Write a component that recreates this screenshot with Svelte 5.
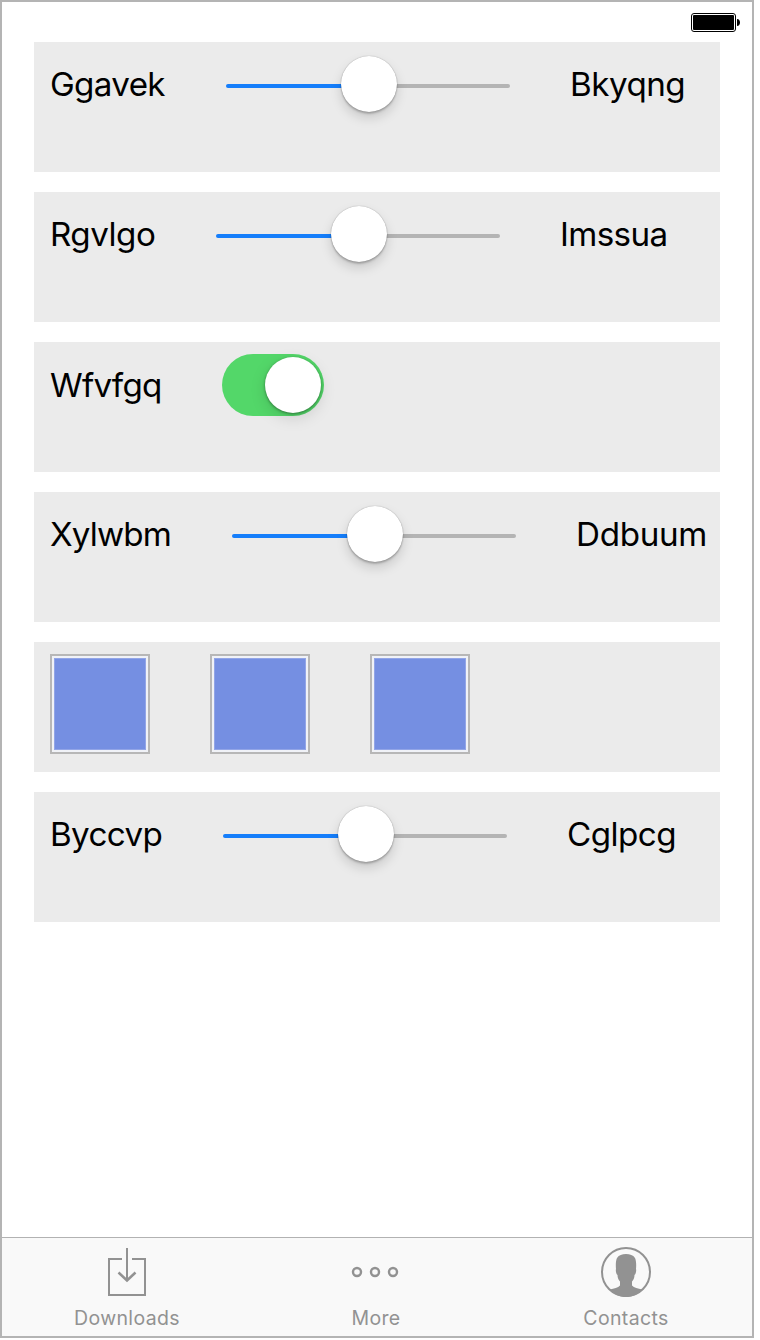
<script>
  const rows = [
    { kind: 'slider', label: 'Ggavek', end: 'Bkyqng', width: 116, track: -0.65, endTrack: -0.5 },
    { kind: 'slider', label: 'Rgvlgo', end: 'Imssua', width: 106, track: -0.5, endTrack: -0.65 },
    { kind: 'switch', label: 'Wfvfgq', width: 112, track: -0.75 },
    { kind: 'slider', label: 'Xylwbm', end: 'Ddbuum', width: 122, track: -0.85, endTrack: -0.3 },
    { kind: 'swatches' },
    { kind: 'slider', label: 'Byccvp', end: 'Cglpcg', width: 113, track: -0.65, endTrack: -0.55 }
  ];
</script>

<div class="screen">
  <header>
    <svg class="battery" width="50" height="20" viewBox="0 0 50 20">
      <rect x=".5" y=".5" width="44" height="18" rx="2.5" fill="#fff" stroke="#000" />
      <rect x="2" y="2" width="41" height="15" rx="1" />
      <path d="M46 6c4 0 4 7 0 7z" />
    </svg>
  </header>
  <main>
    {#each rows as row}
      <section class="card">
        {#if row.kind === 'swatches'}
          {#each [0, 1, 2] as n (n)}
            <div class="swatch"><div class="inner"></div></div>
          {/each}
        {:else}
          <span class="label {row.kind}-label" style="width:{row.width}px;letter-spacing:{row.track}px">{row.label}</span>
          {#if row.kind === 'slider'}
            <div class="slider">
              <div class="filled"></div>
              <div class="thumb"></div>
              <div class="rest"></div>
            </div>
            <span class="label" style="letter-spacing:{row.endTrack}px">{row.end}</span>
          {:else}
            <div class="toggle"><div class="knob"></div></div>
          {/if}
        {/if}
      </section>
    {/each}
  </main>
  <nav>
    <div class="tab">
      <svg width="50" height="54" viewBox="0 0 50 54" fill="none" stroke="#929292" stroke-width="2">
        <path d="M20 15H7v36h36V15H30M25 4v32" />
        <path stroke-width="2.5" d="M16.500 28.500l8.500 8 8.500-8" />
      </svg>
      <span class="downloads">Downloads</span>
    </div>
    <div class="tab">
      <svg class="dots" width="50" height="54" viewBox="0 0 50 54" fill="none" stroke="#929292" stroke-width="2.4">
        <circle cx="7" cy="28" r="4" /><circle cx="25" cy="28" r="4" /><circle cx="43" cy="28" r="4" />
      </svg>
      <span class="more">More</span>
    </div>
    <div class="tab">
      <svg class="person" width="50" height="54" viewBox="0 0 50 54">
        <circle cx="25" cy="28" r="24" fill="none" stroke="#929292" stroke-width="2" />
        <path fill="#929292" d="M15 25C14.500 20 15 16 16 14c2-3 5-4 9-4s7 1 9 4c1 2 1.500 6 1 11 .5 1 0 5-1.500 6 0 3-1 5-2.500 6.500v4c2 2.500 6 3 10 4C37 50.500 31 53 25 53S13 50.500 9 45.500c4-1 8-1.500 10-4v-4c-1.500-1.500-2.500-3.500-2.500-6.500-1.500-1-2-5-1.500-6z" />
      </svg>
      <span class="contacts">Contacts</span>
    </div>
  </nav>
</div>

<style>
  :global(body) {
    margin: 0;
    background: #fff;
  }
  .screen {
    box-sizing: border-box;
    width: 754px;
    height: 1338px;
    border: 2px solid #b4b4b4;
    background: #fff;
    display: flex;
    flex-direction: column;
    font-family: Inter, sans-serif;
    color: #000;
  }
  header {
    height: 40px;
    box-sizing: border-box;
    padding: 11px 11px 0 0;
    display: flex;
    justify-content: flex-end;
  }
  .battery {
    display: block;
  }
  main {
    flex: 1;
    display: flex;
    flex-direction: column;
    gap: 20px;
    padding: 0 32px;
  }
  .card {
    box-sizing: border-box;
    height: 130px;
    padding: 12px 0 0 16px;
    background: #ebebeb;
    display: flex;
    align-items: flex-start;
    gap: 60px;
  }
  .label {
    flex: none;
    font-size: 33.2px;
    line-height: 40px;
    padding-top: 10px;
    white-space: nowrap;
  }
  .switch-label {
    padding-top: 11px;
  }
  .slider {
    flex: none;
    width: 284px;
    height: 60px;
    display: flex;
    align-items: center;
  }
  .filled,
  .rest {
    height: 4px;
    flex: 1;
    margin-top: 4px;
  }
  .filled {
    background: #157efb;
    border-radius: 2px 0 0 2px;
    margin-right: -2px;
    flex: 0 0 117px;
  }
  .rest {
    background: #b4b4b4;
    border-radius: 0 2px 2px 0;
    margin-left: -2px;
  }
  .thumb,
  .knob {
    flex: none;
    width: 56px;
    height: 56px;
    border-radius: 50%;
    background: #fff;
    z-index: 1;
  }
  .thumb {
    box-shadow: 0 0 1px rgba(0, 0, 0, 0.4), 0 2px 2px rgba(0, 0, 0, 0.2), 0 6px 12px rgba(0, 0, 0, 0.15);
  }
  .toggle {
    box-sizing: border-box;
    width: 102px;
    height: 62px;
    padding: 3px;
    border-radius: 31px;
    background: #53d769;
    display: flex;
    justify-content: flex-end;
  }
  .knob {
    box-shadow: 0 1px 3px rgba(0, 0, 0, 0.4), 0 5px 16px rgba(0, 0, 0, 0.13);
  }
  .swatch {
    box-sizing: border-box;
    width: 100px;
    height: 100px;
    border: 2px solid #b7b7b7;
    background: #f0f2f7;
    padding: 2px;
  }
  .inner {
    box-sizing: border-box;
    height: 92px;
    background: #758fe2;
    border: 1px solid #92a5e7;
  }
  nav {
    height: 99px;
    box-sizing: border-box;
    border-top: 1px solid #b2b2b2;
    background: #f9f9f9;
    display: grid;
    grid-template-columns: repeat(3, 250px);
  }
  .tab {
    display: flex;
    flex-direction: column;
    align-items: center;
    padding-top: 6px;
    font-size: 19.5px;
    line-height: 24px;
    color: #929292;
    letter-spacing: 0.35px;
  }
  .tab svg {
    display: block;
    margin-bottom: 8px;
    overflow: visible;
  }
  .tab .dots {
    margin-right: 4px;
  }
  .tab .person {
    margin-right: 2px;
  }
  .more,
  .contacts {
    margin-right: 2px;
  }
</style>
